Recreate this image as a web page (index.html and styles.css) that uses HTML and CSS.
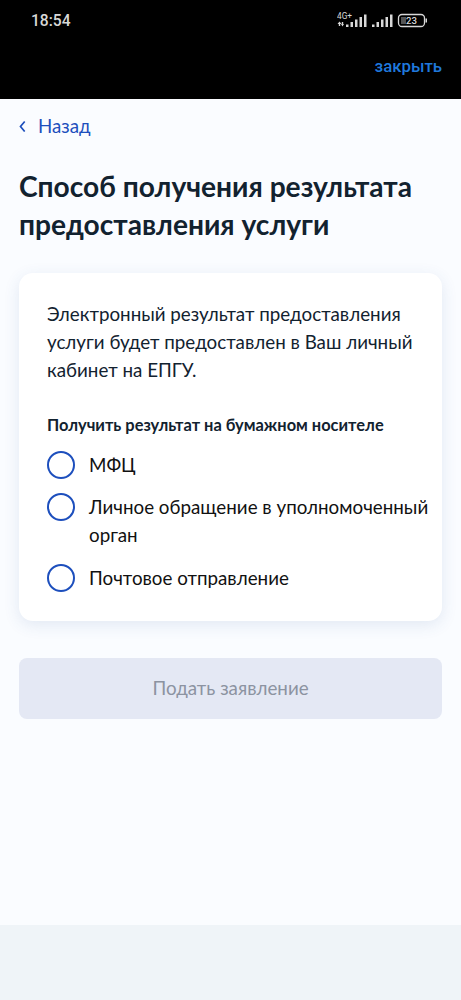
FILE: index.html
```
<!DOCTYPE html>
<html lang="ru">
<head>
<meta charset="utf-8">
<title>Способ получения результата</title>
<link rel="stylesheet" href="styles.css">
</head>
<body>
<header class="top">
  <div class="status">
    <span class="time">18:54</span>
    <svg class="indicators" width="92" height="20" viewBox="0 0 92 20" fill="#d8d8d8">
      <text x="0" y="9" class="net" textLength="15" lengthAdjust="spacingAndGlyphs">4G+</text>
      <path d="M.5 14l2-2.500 2 2.500H3.200v2H1.800v-2zM4 14h.8v-2h1.400v2H7l-1.500 2.500z"/>
      <path d="M9 14.500h2.500V17H9zM13.500 12H16v5h-2.500zM18 9.500h2.500V17H18zM22.500 7H25v10h-2.500zM27 4.500h2.500V17H27z"/>
      <path d="M35 14.500h2.500V17H35zM39.500 12H42v5h-2.500zM44 9.500h2.500V17H44zM48.500 7H51v10h-2.500zM53 4.500h2.500V17H53z"/>
      <rect x="61.500" y="4.500" width="26" height="12" rx="3.500" fill="none" stroke="#d8d8d8" stroke-width="1.300"/>
      <rect x="64" y="7" width="5" height="7" fill="#555"/>
      <path d="M88.500 8.500H90v4h-1.500z"/>
      <text x="69" y="14" class="charge" textLength="11" lengthAdjust="spacingAndGlyphs">23</text>
    </svg>
  </div>
  <a class="close">закрыть</a>
</header>
<main class="page">
  <a class="back"><svg width="7" height="12" viewBox="0 0 7 12"><path d="M5.700 1.500L1.500 6.500l4.200 5" fill="none" stroke="#1d4fbd" stroke-width="1.700"/></svg><span class="back-text">Назад</span></a>
  <h1 class="title">Способ получения результата<br>предоставления услуги</h1>
  <section class="card">
    <p class="info">Электронный результат предоставления<br>услуги будет предоставлен в Ваш личный<br>кабинет на ЕПГУ.</p>
    <h2 class="question">Получить результат на бумажном носителе</h2>
    <div class="options">
      <label class="option"><span class="radio"></span><span class="label">МФЦ</span></label>
      <label class="option"><span class="radio"></span><span class="label">Личное обращение в уполномоченный<br>орган</span></label>
      <label class="option"><span class="radio"></span><span class="label">Почтовое отправление</span></label>
    </div>
  </section>
  <button class="submit" disabled>Подать заявление</button>
</main>
<footer class="bottom"></footer>
</body>
</html>
```
FILE: styles.css
```
* { box-sizing: border-box; }
body { margin: 0; height: 1000px; display: flex; flex-direction: column; font-family: Lato, sans-serif; background: #fafcff; color: #12222f; overflow: hidden; }
.top { height: 99px; background: #000; flex: none; }
.status { height: 42px; display: flex; justify-content: space-between; padding: 10px 32px 0 31px; }
.time { font: 500 15.600px/23px Roboto, sans-serif; color: #d8d8d8; }
.indicators { flex: none; }
.net { font: 400 8.500px Roboto, sans-serif; }
.charge { font: 500 9.500px Roboto, sans-serif; }
.close { display: block; text-align: right; padding-right: 19px; font: 500 16.800px/48px Roboto, sans-serif; color: #1f78dc; }
.page { flex: 1; padding: 13px 19px 0; }
.back { display: flex; align-items: center; gap: 12px; height: 28px; color: #1d4fbd; font-size: 18.700px; white-space: nowrap; }
.title { margin: 27px 0 0; font-size: 28.150px; line-height: 38px; font-weight: 700; white-space: nowrap; }
.card { margin-top: 30px; height: 348px; border-radius: 14px; background: #fff; box-shadow: 0 4px 16px rgba(50, 90, 160, .12); padding: 27px 0 0 28px; }
.info { margin: 0; font-size: 18.780px; line-height: 28px; white-space: nowrap; }
.question { margin: 29px 0 0; font-size: 16.430px; line-height: 23px; font-weight: 700; white-space: nowrap; }
.options { display: flex; flex-direction: column; gap: 14.300px; margin-top: 14.700px; }
.option { display: flex; gap: 14px; font-size: 18.780px; line-height: 28.150px; white-space: nowrap; color: #111; }
.radio { width: 28px; height: 28px; border: 2px solid #1d4fbd; border-radius: 50%; background: #fff; flex: none; }
.submit { display: block; width: 100%; height: 61px; margin-top: 37px; border: 0; border-radius: 8px; background: #e4e8f4; color: #8c93a1; padding: 0 0 2px; font: 18.780px Lato, sans-serif; }
.bottom { height: 75px; background: #eff4f8; flex: none; }
```
